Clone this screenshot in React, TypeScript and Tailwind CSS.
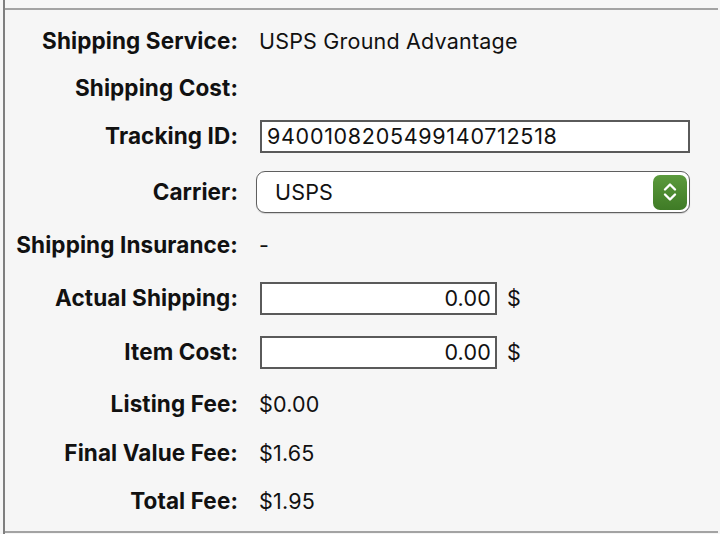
import React from "react";

const font = { fontFamily: "Inter, 'Liberation Sans', sans-serif" };

function Row({ h, label, children }: { h: string; label: string; children?: React.ReactNode }) {
  return (
    <div className={`flex items-center ${h}`}>
      <div className="w-[233px] shrink-0 text-right font-bold text-[22.5px] tracking-[0.1px] text-[#111]">{label}</div>
      <div className="ml-[21px] flex items-center text-[21.5px] tracking-[0.2px] text-[#111]">{children}</div>
    </div>
  );
}

function Chevrons() {
  return (
    <svg width="16" height="24" viewBox="0 0 16 24" fill="none">
      <path d="M3 9.5 L8 4.5 L13 9.5" stroke="white" strokeWidth="2.4" strokeLinecap="round" strokeLinejoin="round" />
      <path d="M3 14.5 L8 19.5 L13 14.5" stroke="white" strokeWidth="2.4" strokeLinecap="round" strokeLinejoin="round" />
    </svg>
  );
}

export default function App() {
  return (
    <div className="w-[720px] h-[534px] bg-[#f6f6f6] flex" style={font}>
      <div className="ml-[3px] w-[715px] h-full border-l-2 border-[#7f7f7f] pt-[8px]">
        <div className="w-[713px] h-[525px] border-y-2 border-[#a3a3a3] pt-[7px]">
          <Row h="h-[48px]" label="Shipping Service:">
            <span>USPS Ground Advantage</span>
          </Row>
          <Row h="h-[46px]" label="Shipping Cost:" />
          <Row h="h-[50px]" label="Tracking ID:">
            <div className="ml-[1px] w-[430px] h-[33px] bg-white border-2 border-[#5a5a5a] flex items-center pl-[5px] tracking-[0.7px]">
              9400108205499140712518
            </div>
          </Row>
          <Row h="h-[58px] pt-[4px]" label="Carrier:">
            <div className="-ml-[3px] w-[434px] h-[42px] bg-white border-[1.5px] border-[#5f5f5f] rounded-[9px] flex items-center justify-between pl-[18px] pr-[2px] shadow-[0_1px_1px_rgba(0,0,0,0.15)]">
              <span>USPS</span>
              <div className="w-[34px] h-[35px] rounded-[7px] bg-gradient-to-b from-[#5b9a3c] to-[#3f7b26] flex items-center justify-center">
                <Chevrons />
              </div>
            </div>
          </Row>
          <Row h="h-[52px]" label="Shipping Insurance:">
            <span>-</span>
          </Row>
          <Row h="h-[54px]" label="Actual Shipping:">
            <div className="ml-[1px] w-[237px] h-[33px] bg-white border-2 border-[#5a5a5a] flex items-center justify-end pr-[4px]">
              0.00
            </div>
            <span className="ml-[10px]">$</span>
          </Row>
          <Row h="h-[54px]" label="Item Cost:">
            <div className="ml-[1px] w-[237px] h-[33px] bg-white border-2 border-[#5a5a5a] flex items-center justify-end pr-[4px]">
              0.00
            </div>
            <span className="ml-[10px]">$</span>
          </Row>
          <Row h="h-[50px]" label="Listing Fee:">
            <span>$0.00</span>
          </Row>
          <Row h="h-[48px]" label="Final Value Fee:">
            <span>$1.65</span>
          </Row>
          <Row h="h-[48px]" label="Total Fee:">
            <span>$1.95</span>
          </Row>
        </div>
      </div>
    </div>
  );
}
